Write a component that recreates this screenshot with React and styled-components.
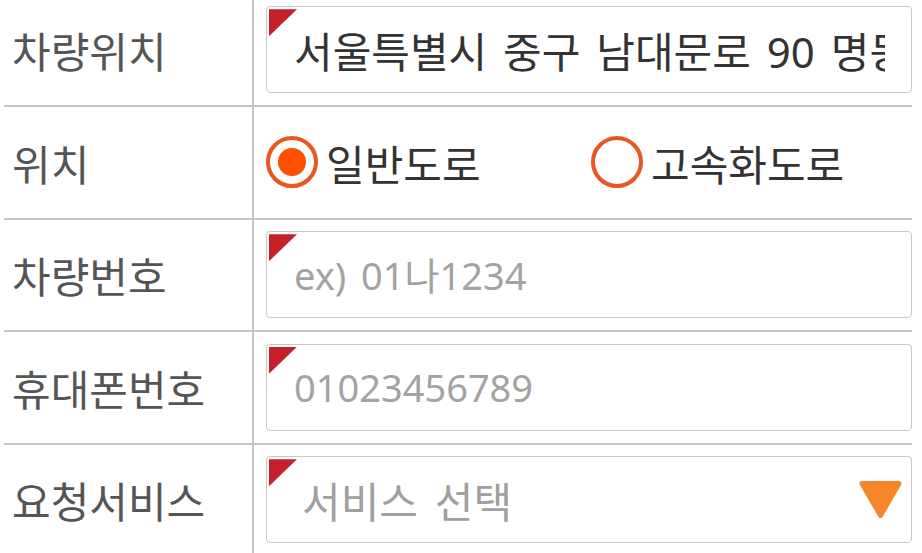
import React from "react";
import styled, { createGlobalStyle } from "styled-components";

const Global = createGlobalStyle`
  html, body {
    margin: 0;
    padding: 0;
    background: #ffffff;
    overflow: hidden;
    height: 553px;
  }
  body {
    font-family: "Noto Sans", "Noto Sans CJK KR", sans-serif;
  }
  * { box-sizing: border-box; }
`;

const Table = styled.div`
  margin: -5.5px 0 0 4px;
  width: 908px;
  display: flex;
  flex-direction: column;
`;

const Row = styled.div`
  display: grid;
  grid-template-columns: 250px 1fr;
  height: 112.5px;
  border-bottom: 2px solid #c4c4c4;
`;

const LabelCell = styled.div`
  display: flex;
  align-items: center;
  padding-left: 8px;
  border-right: 2px solid #c4c4c4;
  font-size: 42px;
  color: #555555;
  white-space: nowrap;
`;

const ValueCell = styled.div`
  display: flex;
  align-items: center;
  padding-left: 12px;
  min-width: 0;
`;

const FieldWrap = styled.div`
  position: relative;
  flex: 1;
  height: 87px;
  min-width: 0;
`;

const Required = styled.span`
  position: absolute;
  left: 3px;
  top: 3px;
  width: 28px;
  height: 27px;
  background: #c6202b;
  clip-path: polygon(0 0, 100% 0, 0 100%);
  pointer-events: none;
`;

const TextInput = styled.input`
  width: 100%;
  height: 100%;
  border: 1px solid #c8c8c8;
  border-radius: 4px;
  padding: 0 26px 0 27px;
  font-family: inherit;
  font-size: ${(p) => (p.$hangul ? "42px" : "38px")};
  word-spacing: 5px;
  color: #333333;
  background: #ffffff;
  outline: none;
  &::placeholder {
    color: #a3a3a3;
  }
`;

const SelectBox = styled.div`
  width: 100%;
  height: 100%;
  border: 1px solid #c8c8c8;
  border-radius: 4px;
  padding: 0 8px 0 35px;
  display: flex;
  align-items: center;
  justify-content: space-between;
  font-size: 42px;
  word-spacing: 6px;
  color: #a0a0a0;
  background: #ffffff;
`;

const RadioGroup = styled.div`
  display: flex;
  align-items: center;
  width: 100%;
`;

const RadioOption = styled.label`
  display: flex;
  align-items: center;
  gap: 8px;
  flex: 0 0 ${(p) => p.$width || "auto"};
  font-size: 42px;
  color: #333333;
  cursor: pointer;
`;

const RadioCircle = styled.span`
  width: 52px;
  height: 52px;
  border-radius: 50%;
  border: 4px solid #ea5520;
  display: flex;
  align-items: center;
  justify-content: center;
  flex-shrink: 0;
  &::after {
    content: "";
    width: 28px;
    height: 28px;
    border-radius: 50%;
    background: ${(p) => (p.$checked ? "#ff4f00" : "transparent")};
  }
`;

const Arrow = () => (
  <svg width="45" height="39" viewBox="0 0 45 39">
    <polygon
      points="4,3.5 41,3.5 22.5,35.5"
      fill="#f7862b"
      stroke="#f7862b"
      strokeWidth="5"
      strokeLinejoin="round"
    />
  </svg>
);

export default function App() {
  return (
    <>
      <Global />
      <Table>
        <Row>
          <LabelCell>차량위치</LabelCell>
          <ValueCell>
            <FieldWrap>
              <TextInput $hangul readOnly value="서울특별시 중구 남대문로 90 명동길 14" />
              <Required />
            </FieldWrap>
          </ValueCell>
        </Row>
        <Row>
          <LabelCell>위치</LabelCell>
          <ValueCell>
            <RadioGroup>
              <RadioOption $width="325px">
                <RadioCircle $checked />
                일반도로
              </RadioOption>
              <RadioOption>
                <RadioCircle />
                고속화도로
              </RadioOption>
            </RadioGroup>
          </ValueCell>
        </Row>
        <Row>
          <LabelCell>차량번호</LabelCell>
          <ValueCell>
            <FieldWrap>
              <TextInput placeholder="ex) 01나1234" />
              <Required />
            </FieldWrap>
          </ValueCell>
        </Row>
        <Row>
          <LabelCell>휴대폰번호</LabelCell>
          <ValueCell>
            <FieldWrap>
              <TextInput placeholder="01023456789" />
              <Required />
            </FieldWrap>
          </ValueCell>
        </Row>
        <Row>
          <LabelCell>요청서비스</LabelCell>
          <ValueCell>
            <FieldWrap>
              <SelectBox>
                <span>서비스 선택</span>
                <Arrow />
              </SelectBox>
              <Required />
            </FieldWrap>
          </ValueCell>
        </Row>
      </Table>
    </>
  );
}
